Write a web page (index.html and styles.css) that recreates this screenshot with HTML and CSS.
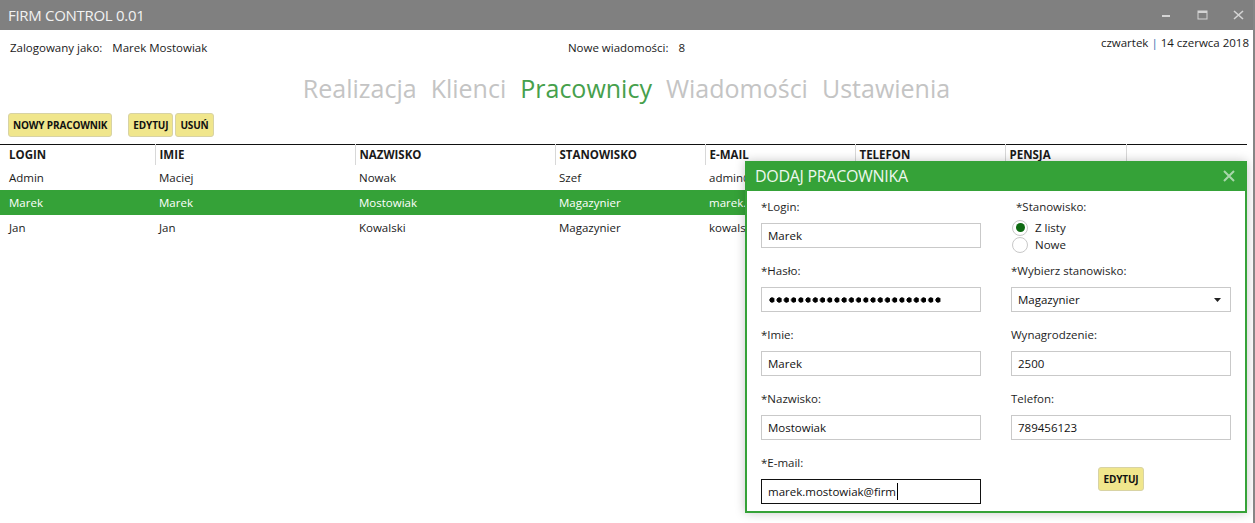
FILE: index.html
```html
<!DOCTYPE html>
<html lang="pl">
<head>
<meta charset="utf-8">
<title>FIRM CONTROL 0.01</title>
<link rel="stylesheet" href="styles.css">
</head>
<body>
<div class="window">
  <header class="titlebar">
    <span class="title">FIRM CONTROL 0.01</span>
    <div class="controls">
      <span class="ctl"><svg width="10" height="10" viewBox="0 0 10 10"><rect x="1" y="5" width="8" height="2" fill="#d4d4d4"/></svg></span>
      <span class="ctl"><svg width="11" height="10" viewBox="0 0 11 10"><rect x="1" y="1" width="9" height="8" fill="none" stroke="#d4d4d4" stroke-width="1"/><rect x="1" y="1" width="9" height="2" fill="#d4d4d4"/></svg></span>
      <span class="ctl"><svg width="11" height="10" viewBox="0 0 11 10"><path d="M1 1 L10 9 M10 1 L1 9" stroke="#d4d4d4" stroke-width="1.6"/></svg></span>
    </div>
  </header>

  <div class="infobar">
    <div class="user">Zalogowany jako:<span class="val">Marek Mostowiak</span></div>
    <div class="msgs">Nowe wiadomości:<span class="val">8</span></div>
    <div class="date">czwartek <span class="pipe">|</span> 14 czerwca 2018</div>
  </div>

  <nav class="nav">
    <span class="nav-item">Realizacja</span>
    <span class="nav-item">Klienci</span>
    <span class="nav-item active">Pracownicy</span>
    <span class="nav-item">Wiadomości</span>
    <span class="nav-item">Ustawienia</span>
  </nav>

  <div class="toolbar">
    <button class="btn wide">NOWY PRACOWNIK</button>
    <div class="btn-group">
      <button class="btn">EDYTUJ</button>
      <button class="btn">USUŃ</button>
    </div>
  </div>

  <table class="grid">
    <colgroup>
      <col class="c1"><col class="c2"><col class="c2"><col class="c3"><col class="c3"><col class="c3"><col class="c4"><col>
    </colgroup>
    <thead>
      <tr><th>LOGIN</th><th>IMIE</th><th>NAZWISKO</th><th>STANOWISKO</th><th>E-MAIL</th><th>TELEFON</th><th>PENSJA</th><th class="last"></th></tr>
    </thead>
    <tbody>
      <tr><td>Admin</td><td>Maciej</td><td>Nowak</td><td>Szef</td><td>admin@firm.pl</td><td>123456789</td><td>5000</td><td></td></tr>
      <tr class="selected"><td>Marek</td><td>Marek</td><td>Mostowiak</td><td>Magazynier</td><td>marek.mostowiak@firm.pl</td><td>789456123</td><td>2500</td><td></td></tr>
      <tr><td>Jan</td><td>Jan</td><td>Kowalski</td><td>Magazynier</td><td>kowalski@firm.pl</td><td>456123789</td><td>2500</td><td></td></tr>
    </tbody>
  </table>

  <div class="dialog">
    <div class="dialog-title">
      <span>DODAJ PRACOWNIKA</span>
      <svg class="close" width="12" height="12" viewBox="0 0 12 12"><path d="M1 1 L11 11 M11 1 L1 11" stroke="#a9d6ab" stroke-width="2"/></svg>
    </div>
    <div class="form">
      <div class="field">
        <label class="lbl">*Login:</label>
        <div class="input">Marek</div>
      </div>
      <div class="field">
        <label class="lbl indent">*Stanowisko:</label>
        <div class="radios">
          <div class="radio"><span class="circle checked"></span>Z listy</div>
          <div class="radio"><span class="circle"></span>Nowe</div>
        </div>
      </div>
      <div class="field">
        <label class="lbl">*Hasło:</label>
        <div class="input"><span class="dots"></span></div>
      </div>
      <div class="field">
        <label class="lbl">*Wybierz stanowisko:</label>
        <div class="input select">Magazynier<svg class="arrow" width="7" height="4" viewBox="0 0 7 4"><path d="M0 0 H7 L3.5 4 Z" fill="#222"/></svg></div>
      </div>
      <div class="field">
        <label class="lbl">*Imie:</label>
        <div class="input">Marek</div>
      </div>
      <div class="field">
        <label class="lbl">Wynagrodzenie:</label>
        <div class="input">2500</div>
      </div>
      <div class="field">
        <label class="lbl">*Nazwisko:</label>
        <div class="input">Mostowiak</div>
      </div>
      <div class="field">
        <label class="lbl">Telefon:</label>
        <div class="input">789456123</div>
      </div>
      <div class="field">
        <label class="lbl">*E-mail:</label>
        <div class="input focused">marek.mostowiak@firm<span class="caret"></span></div>
      </div>
      <div class="field center">
        <button class="btn">EDYTUJ</button>
      </div>
    </div>
  </div>
</div>
</body>
</html>
```
FILE: styles.css
```css
* { box-sizing: border-box; }
html, body { margin: 0; padding: 0; background: #fff; }
body {
  font-family: "Open Sans", "Noto Sans", sans-serif;
  font-size: 11.5px;
  color: #1a1a1a;
}
.window {
  position: relative;
  width: 1255px;
  height: 523px;
  border-right: 2px solid #868686;
  overflow: hidden;
  background: #fff;
}
.titlebar {
  height: 30px;
  background: #808080;
  display: flex;
  align-items: center;
  justify-content: space-between;
  padding-left: 8px;
}
.title {
  color: #f2f2f2;
  font-size: 15px;
  letter-spacing: -0.3px;
}
.controls { display: flex; gap: 6px; height: 30px; }
.ctl {
  width: 30px;
  height: 30px;
  display: flex;
  align-items: center;
  justify-content: center;
}
.infobar {
  height: 41px;
  display: grid;
  grid-template-columns: 1fr auto 1fr;
  line-height: 16px;
}
.user { padding: 10px 0 0 10px; }
.msgs { padding-top: 10px; }
.val { margin-left: 10px; }
.date { padding: 5px 4px 0 0; text-align: right; }
.pipe { color: #2b6fb0; }
.nav {
  height: 34px;
  display: flex;
  justify-content: center;
  gap: 14px;
  font-size: 25px;
  line-height: 34px;
  color: #c4c4c4;
}
.nav-item.active { color: #46a04c; }
.toolbar {
  margin-top: 8px;
  height: 24px;
  padding-left: 8px;
  display: flex;
  gap: 16px;
}
.btn-group { display: flex; gap: 2px; }
.btn {
  height: 24px;
  padding: 0 4px;
  background: #f0e68c;
  border: 1px solid #d8d3a4;
  border-radius: 3px;
  font-family: "Open Sans", "Noto Sans", sans-serif;
  font-weight: 700;
  font-size: 10px;
  letter-spacing: -0.15px;
  color: #111;
  cursor: pointer;
}
.grid {
  margin-top: 7px;
  width: 1247px;
  table-layout: fixed;
  border-collapse: collapse;
  border-top: 1px solid #111;
}
.c1 { width: 155px; }
.c2 { width: 200px; }
.c3 { width: 150px; }
.c4 { width: 121px; }
.grid th {
  height: 20px;
  padding: 0 0 0 4px;
  text-align: left;
  font-weight: 700;
  font-size: 11.5px;
  border-right: 1px solid #d8d8d8;
  white-space: nowrap;
  overflow: hidden;
}
.grid th.last { border-right: none; }
.grid td {
  height: 25px;
  padding: 1px 0 0 4px;
  white-space: nowrap;
  overflow: hidden;
}
.grid th:first-child, .grid td:first-child { padding-left: 9px; }
.grid tr.selected td { background: #35a238; color: #fff; }

.dialog {
  position: absolute;
  left: 745px;
  top: 161px;
  width: 502px;
  height: 352px;
  background: #fff;
  border: 2px solid #35a238;
  border-top: none;
  box-shadow: 0 0 10px rgba(0, 0, 0, 0.22);
}
.dialog-title {
  height: 30px;
  margin: 0 -2px;
  background: #35a238;
  color: #eef7ee;
  font-size: 16px;
  display: flex;
  align-items: center;
  justify-content: space-between;
  padding: 0 12px 0 10px;
  letter-spacing: -0.3px;
}
.form {
  padding: 6px 0 0 14px;
  display: grid;
  grid-template-columns: 220px 220px;
  grid-auto-rows: 64px;
  column-gap: 30px;
}
.lbl {
  display: block;
  line-height: 16px;
  height: 18px;
  padding-top: 2px;
  margin-bottom: 8px;
  color: #1e1e1e;
}
.lbl.indent { padding-left: 5px; margin-bottom: 4px; }
.input {
  position: relative;
  height: 25px;
  border: 1px solid #c9c9c9;
  padding-left: 6px;
  line-height: 23px;
  color: #111;
  display: flex;
  align-items: center;
}
.input.focused { border-color: #111; }
.caret {
  display: inline-block;
  width: 1px;
  height: 17px;
  background: #000;
  margin-left: 1px;
}
.select { justify-content: space-between; padding-right: 9px; }
.dots {
  display: block;
  width: 173px;
  height: 6px;
  margin-left: 1px;
  background: radial-gradient(circle at 3px 3px, #000 2.4px, transparent 2.9px) 0 0 / 7.23px 6px repeat-x;
}
.radios { display: flex; flex-direction: column; }
.radio {
  height: 17px;
  display: flex;
  align-items: center;
  gap: 7px;
  padding-left: 1px;
}
.circle {
  width: 16px;
  height: 16px;
  border-radius: 50%;
  border: 1px solid #c8c8c8;
  background: #fff;
  display: flex;
  align-items: center;
  justify-content: center;
}
.circle.checked::after {
  content: "";
  width: 9px;
  height: 9px;
  border-radius: 50%;
  background: #0e6a12;
}
.field.center { display: flex; justify-content: center; align-items: flex-start; padding-top: 14px; }
```
